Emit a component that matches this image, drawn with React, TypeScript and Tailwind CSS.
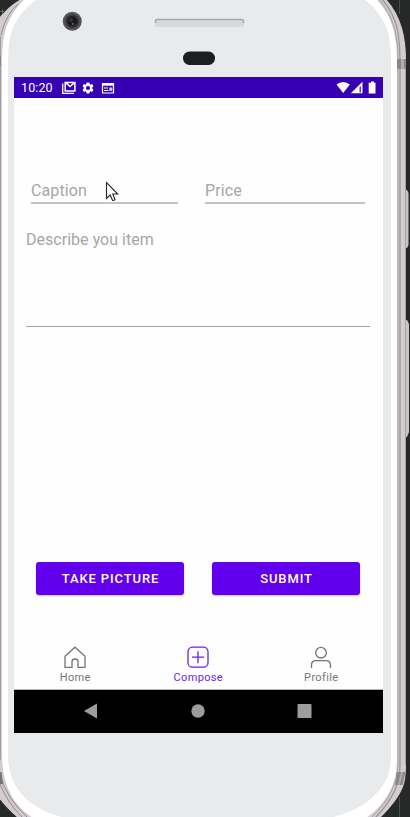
import React from "react";

function PhoneBody() {
  return (
    <svg className="absolute inset-0 h-full w-full" viewBox="0 0 410 817" aria-hidden="true">
      <rect width="410" height="817" fill="#272929" />
      <path d="M0 11.500H4M2.500 9V14" stroke="#4f8a45" strokeWidth="0.800" />
      <path d="M399.500 0V14M399.500 797V817" stroke="#4a4c4c" strokeWidth="1" />
      <path d="M405 190H407L408.500 193V245L407 248H405Z" fill="#c9c5c7" />
      <path d="M405 320H407L409 324V432L407 437H405Z" fill="#c9c5c7" />
      <path d="M21 -1C11 5 5 11 -1 18V798C5 806 11 812 18 818H380C390 808 398 799 403 787Q406 779 406 765V60Q406 42 402 28Q397 11 386 -1Z" fill="#d2ccd0" />
      <path d="M382 -1Q394 13 398 32Q400 45 400 60V765Q400 780 394 792Q387 806 375 818" fill="none" stroke="#969194" strokeWidth="1.200" />
      <path d="M379 -1Q391 14 395.500 32Q398 46 398 60V765Q398 778 392 790Q385 805 371 818" fill="none" stroke="#a5a0a3" strokeWidth="1" />
      <path d="M405.500 60V765" stroke="#aaa1a7" strokeWidth="1" />
      <path d="M18 4Q6 14 1 35M0 775Q7 799 27 817M0 784Q7 802 22 817" fill="none" stroke="#918b8f" strokeWidth="1" />
      <path d="M0.500 36V760" stroke="#a59ea2" strokeWidth="1" />
      <path d="M0 56H1V66H0ZM397 59H406V69H397ZM397 772H405.500L402.500 785H395Z" fill="#8c868a" />
      <path d="M401 59H404V69H401ZM401 772H403L400 785H398Z" fill="#b1abae" />
      <path d="M0 772H1.500L3 784H0Z" fill="#777377" />
      <path d="M25 -1Q12 11 6 28Q2 41 2 60V755Q2 778 11 795Q18 808 33 818H366Q382 807 390 791Q397 778 397 758V60Q397 43 393 28Q388 11 376 -1Z" fill="#ffffff" />
      <path d="M37 -1Q21 11 14 25Q8 38 8 60V755Q8 777 19 791Q34 811 66 818H330Q367 808 380 789Q391 777 391 755V60Q391 42 387 29Q380 11 364 -1Z" fill="#e8eaec" />
      <circle cx="72.300" cy="21.300" r="9.500" fill="#555558" />
      <circle cx="72.300" cy="21.300" r="7" fill="#39393c" />
      <circle cx="72.300" cy="21.300" r="5" fill="#17191b" />
      <circle cx="71" cy="20" r="2" fill="#30354a" />
      <circle cx="73" cy="24" r="1.100" fill="#767135" />
      <rect x="155" y="19" width="89" height="8" rx="2.500" fill="#d7d9dc" />
      <path d="M155.500 23V21Q155.500 19.500 158 19.500H241Q243.500 19.500 243.500 21V23" fill="none" stroke="#a3a8ae" strokeWidth="1.400" />
      <rect x="183" y="51.500" width="32" height="13.500" rx="6.500" fill="#1c1e20" />
    </svg>
  );
}

function StatusBar() {
  return (
    <div className="flex h-[21px] shrink-0 items-center bg-[#3700b3] pl-[7px] pr-[6px] text-white">
      <span className="w-[41px] text-[12.5px] leading-[21px] tracking-[0.1px]">10:20</span>
      <svg className="mr-[5px] h-[14px] w-[14px]" viewBox="0 0 14 14" fill="none" stroke="#fff">
        <path d="M0.700 2.500V12.400H12" strokeWidth="1.300" />
        <path d="M3.200 1.500H12.900V10H3.200Z" strokeWidth="1.500" />
        <path d="M4 2L8.050 5.500L12.100 2" strokeWidth="1.600" />
      </svg>
      <svg className="mr-[6px] h-[14px] w-[14px]" viewBox="0 0 24 24" fill="#fff">
        <path d="M19.140 12.940c.04-.3.060-.61.060-.94s-.02-.64-.07-.94l2.030-1.580a.5.500 0 0 0 .12-.61l-1.920-3.320a.49.490 0 0 0-.59-.22l-2.390.96a7 7 0 0 0-1.620-.94L14.400 2.810a.48.480 0 0 0-.48-.41h-3.840a.47.470 0 0 0-.47.410l-.36 2.540a7 7 0 0 0-1.620.94l-2.390-.96a.48.480 0 0 0-.59.220L2.740 8.870a.48.480 0 0 0 .12.610l2.030 1.580a6 6 0 0 0 0 1.880l-2.030 1.580a.5.500 0 0 0-.12.610l1.920 3.320c.12.220.37.290.59.220l2.390-.96c.5.380 1.030.7 1.620.94l.36 2.540c.05.240.24.410.48.410h3.840c.24 0 .44-.17.470-.41l.36-2.540a7 7 0 0 0 1.620-.94l2.390.96c.22.080.47 0 .59-.22l1.920-3.320a.48.480 0 0 0-.12-.61zM12 15.600A3.600 3.600 0 1 1 12 8.400a3.600 3.600 0 0 1 0 7.200z" />
      </svg>
      <svg className="h-[14px] w-[14px]" viewBox="0 0 14 14">
        <path d="M1.500 2.500H12.500V12H1.500Z" fill="none" stroke="#fff" strokeWidth="1.200" />
        <path d="M1.500 2.200H12.500V4.700H1.500Z" fill="#fff" />
        <path d="M3 7H7M3 9.500H7.500" stroke="#fff" strokeWidth="1.100" />
        <path d="M8.300 6.500H11.300V9.900H8.300Z" fill="#fff" opacity="0.8" />
      </svg>
      <div className="flex-1" />
      <svg className="h-[14px] w-[41px]" viewBox="0 0 41 14" fill="#fff">
        <path d="M0.500 3.400Q7.200-1.600 13.900 3.400L7.200 11.900Z" />
        <path d="M26.500 0.800V12.200H14.800Z" />
        <path d="M23.600 5.500H24.800V11.500H23.600Z" fill="#3700b3" />
        <path d="M34 1.800H35V0.600H38V1.800H39.500V12.500H32.700V1.800Z" />
      </svg>
    </div>
  );
}

function Cursor() {
  return (
    <svg className="absolute left-[91px] top-[83px] h-[22px] w-[14px]" viewBox="0 0 14 22">
      <path d="M1.500 1.500V17.500L5.200 14L7.500 19.300Q8.500 20 10 18.700L7.800 13H12.800Z" fill="#fff" stroke="#25252f" strokeWidth="1.100" />
    </svg>
  );
}

function NavItem({ label, active, children }: { label: string; active?: boolean; children: React.ReactNode }) {
  return (
    <div className={active ? "flex flex-1 flex-col items-center text-[#6a1fe9]" : "flex flex-1 flex-col items-center text-[#757575]"}>
      <svg className="h-6 w-6" viewBox="0 0 24 24" fill="none" stroke="currentColor" strokeWidth="1.300">
        {children}
      </svg>
      <span className="mt-px pl-[1.5px] text-[11px] leading-[13px] tracking-[0.35px]">{label}</span>
    </div>
  );
}

export default function App() {
  return (
    <div className="relative h-[817px] w-[410px] overflow-hidden font-[Roboto,sans-serif]">
      <PhoneBody />
      <div className="relative pl-[14px] pt-[77px]">
        <div className="flex h-[656px] w-[369px] flex-col bg-[#fefefe]">
          <StatusBar />
          <main className="relative h-[541px] shrink-0 pt-[78px]">
            <div className="flex pl-[17px] text-[16px] text-[#a6a6a6]">
              <div className="mr-[27px] h-[28px] w-[147px] border-b-2 border-[#c4c4c4] leading-[29px] tracking-[0.1px]">Caption</div>
              <div className="h-[28px] w-[160px] border-b-2 border-[#c4c4c4] leading-[29px] tracking-[0.1px]">Price</div>
            </div>
            <div className="ml-[12px] mt-[22px] h-[101px] w-[344px] border-b border-[#a3a3a3] text-[16px] leading-[28px] tracking-[0.03px] text-[#a6a6a6]">
              Describe you item
            </div>
            <div className="mt-[235px] flex gap-[28px] pl-[22px] text-[13px] font-medium tracking-[0.87px] text-white">
              <button className="h-[33px] w-[148px] rounded-[3px] bg-[#6200ee] pl-px leading-[33px] shadow-[0_1px_2px_rgba(0,0,0,0.25)]">TAKE PICTURE</button>
              <button className="h-[33px] w-[148px] rounded-[3px] bg-[#6200ee] pl-px leading-[33px] shadow-[0_1px_2px_rgba(0,0,0,0.25)]">SUBMIT</button>
            </div>
            <Cursor />
          </main>
          <nav className="-ml-px mr-px flex h-[50px] shrink-0 pt-[7px]">
            <NavItem label="Home">
              <path d="M2 10.300L12 1.200L22 10.300V21.300H15V15.800Q15 13 12 13Q9 13 9 15.800V21.300H2Z" />
            </NavItem>
            <NavItem label="Compose" active>
              <rect x="2" y="1.200" width="20" height="20" rx="4.500" />
              <path d="M12 5.200V17.200M6 11.200H18" />
            </NavItem>
            <NavItem label="Profile">
              <circle cx="12" cy="6.700" r="5.300" />
              <path d="M2.500 22V19.200Q2.500 14.700 7 14.700H17Q21.500 14.700 21.500 19.200V22" />
            </NavItem>
          </nav>
          <div className="flex flex-1 border-t border-[#b8b8b8] bg-black pl-[69px] pt-[13px]">
            <svg className="h-[17px] w-[230px]" viewBox="0 0 230 17" fill="#9e9b9c">
              <path d="M1 8L14 0.500V15.500Z" />
              <circle cx="115" cy="8" r="6.700" />
              <rect x="214.500" y="1" width="14" height="14" rx="0.800" />
            </svg>
          </div>
        </div>
      </div>
    </div>
  );
}
